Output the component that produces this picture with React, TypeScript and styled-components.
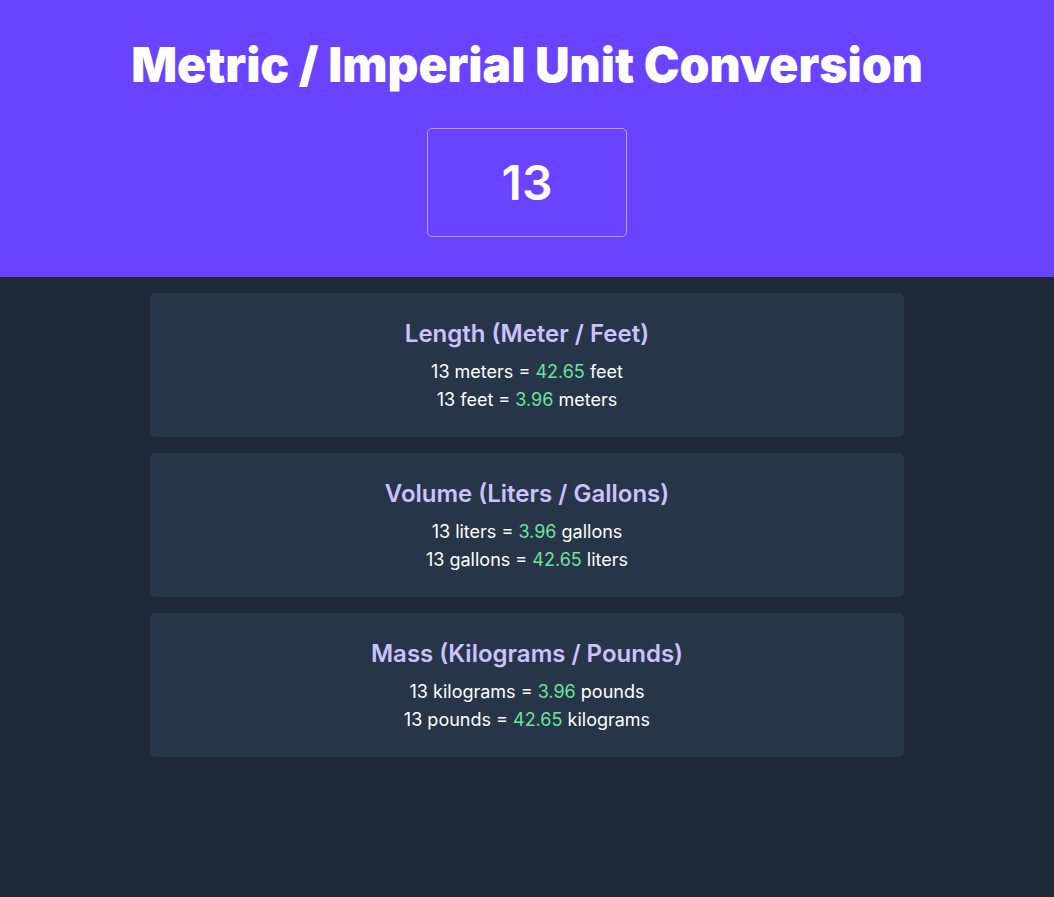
import React from "react";
import styled, { createGlobalStyle } from "styled-components";

const Global = createGlobalStyle`
  html, body { margin: 0; padding: 0; background: #1F2937; }
  body { font-family: Inter, "Noto Sans", sans-serif; min-height: 897px; }
  * { box-sizing: border-box; }
`;

const Header = styled.header`
  background: #6943FF;
  height: 277px;
  display: flex;
  flex-direction: column;
  align-items: center;
  padding-top: 33px;
`;

const Title = styled.h1`
  margin: 0;
  color: #fff;
  font-size: 48px;
  font-weight: 900;
  letter-spacing: 0;
  line-height: 64px;
`;

const InputBox = styled.input`
  margin-top: 31px;
  width: 200px;
  height: 109px;
  background: transparent;
  border: 1px solid #B5A0FF;
  border-radius: 5px;
  color: #fff;
  font-family: Inter, sans-serif;
  font-size: 48px;
  font-weight: 600;
  text-align: center;
  outline: none;
`;

const Main = styled.main`
  width: 754px;
  margin: 16px auto 0;
  display: flex;
  flex-direction: column;
  gap: 16px;
`;

const Card = styled.section`
  background: #273549;
  border-radius: 5px;
  height: 144px;
  padding-top: 25px;
  text-align: center;
`;

const CardTitle = styled.h2`
  margin: 0 0 8px;
  color: #CCC1FF;
  font-size: 24px;
  font-weight: 600;
  line-height: 32px;
`;

const Line = styled.p`
  margin: 0;
  color: #fff;
  font-size: 18px;
  line-height: 28px;
`;

const Value = styled.span`
  color: #6CE39B;
`;

const data = [
  { title: "Length (Meter / Feet)", lines: [["13 meters = ", "42.65", " feet"], ["13 feet = ", "3.96", " meters"]] },
  { title: "Volume (Liters / Gallons)", lines: [["13 liters = ", "3.96", " gallons"], ["13 gallons = ", "42.65", " liters"]] },
  { title: "Mass (Kilograms / Pounds)", lines: [["13 kilograms = ", "3.96", " pounds"], ["13 pounds = ", "42.65", " kilograms"]] },
];

export default function App() {
  return (
    <>
      <Global />
      <Header>
        <Title>Metric / Imperial Unit Conversion</Title>
        <InputBox type="text" defaultValue="13" />
      </Header>
      <Main>
        {data.map((c) => (
          <Card key={c.title}>
            <CardTitle>{c.title}</CardTitle>
            {c.lines.map((l, i) => (
              <Line key={i}>
                {l[0]}<Value>{l[1]}</Value>{l[2]}
              </Line>
            ))}
          </Card>
        ))}
      </Main>
    </>
  );
}
